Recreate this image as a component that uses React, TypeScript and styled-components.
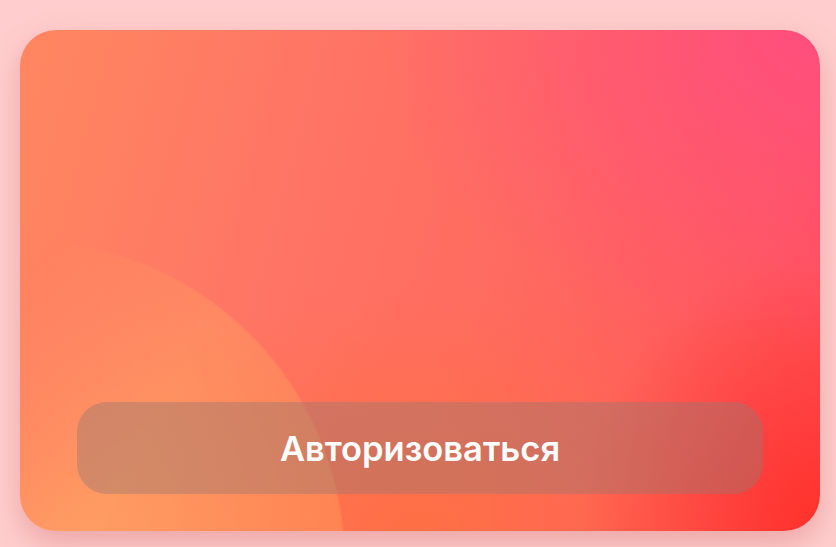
import React from "react";
import styled, { createGlobalStyle } from "styled-components";

const GlobalStyle = createGlobalStyle`
    html, body {
        margin: 0;
        padding: 0;
        background: #ffcdcd;
        font-family: Inter, "Noto Sans", sans-serif;
    }
`;

const Page = styled.div`
    width: 836px;
    height: 547px;
    padding: 30px 16px 16px 20px;
    box-sizing: border-box;
`;

const Card = styled.div`
    position: relative;
    overflow: hidden;
    width: 800px;
    height: 501px;
    border-radius: 36px;
    display: flex;
    flex-direction: column;
    justify-content: flex-end;
    padding: 0 57px 37px 57px;
    box-sizing: border-box;
    background:
        radial-gradient(ellipse 55% 65% at 100% 0%, rgba(255, 78, 128, 0.95) 0%, rgba(255, 80, 120, 0) 100%),
        radial-gradient(ellipse 30% 55% at 100% 100%, rgba(255, 48, 40, 0.95) 0%, rgba(255, 50, 40, 0) 100%),
        radial-gradient(ellipse 45% 50% at 50% 100%, rgba(255, 112, 64, 0.85) 0%, rgba(255, 110, 62, 0) 100%),
        linear-gradient(105deg, #ff8760 0%, #ff7465 35%, #ff6a60 60%, #ff5a5c 85%, #ff4c58 100%);
    box-shadow: 0 12px 28px rgba(214, 120, 120, 0.45);
`;

const Glow = styled.div`
    position: absolute;
    left: -315px;
    bottom: -350px;
    width: 640px;
    height: 640px;
    border-radius: 50%;
    background: radial-gradient(circle, rgba(255, 176, 100, 0.75) 0%, rgba(255, 168, 96, 0.4) 65%, rgba(255, 160, 92, 0.25) 100%);
    -webkit-mask-image: linear-gradient(120deg, transparent 34%, #000 55%);
    mask-image: linear-gradient(120deg, transparent 34%, #000 55%);
    filter: blur(1.5px);
`;

const LoginButton = styled.button`
    position: relative;
    height: 92px;
    width: 100%;
    border: none;
    border-radius: 30px;
    background: rgba(150, 118, 112, 0.42);
    color: #ffffff;
    font-family: Inter, "Noto Sans", sans-serif;
    font-weight: 600;
    font-size: 34.5px;
    cursor: pointer;
`;

export default function App() {
    return (
        <>
            <GlobalStyle />
            <Page>
                <Card>
                    <Glow />
                    <LoginButton>Авторизоваться</LoginButton>
                </Card>
            </Page>
        </>
    );
}
